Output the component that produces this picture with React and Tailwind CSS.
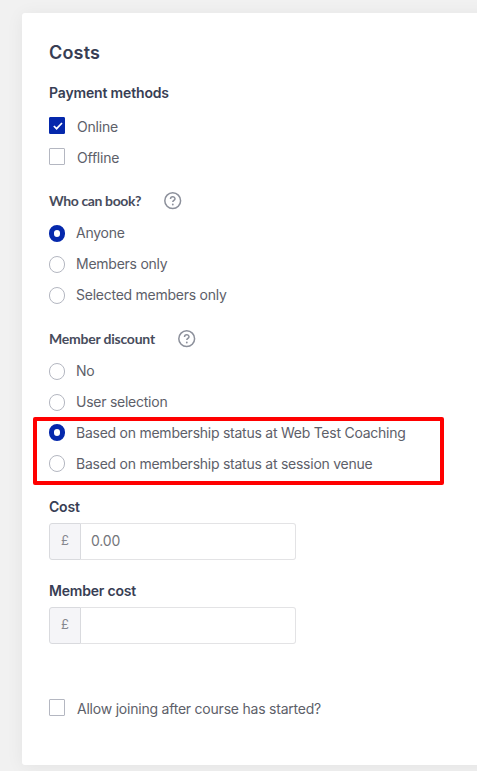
import React, { useState } from "react";
import clsx from "clsx";

const Checkbox = ({ label, checked, onChange }) => (
  <label className="flex items-center h-[31px] cursor-pointer">
    <input
      type="checkbox"
      className="sr-only"
      checked={checked}
      onChange={onChange}
    />
    <span
      className={clsx(
        "flex items-center justify-center shrink-0 w-4 h-[17px] mb-[2px] rounded-[1px] border",
        checked ? "bg-[#0528ac] border-[#0528ac]" : "bg-white border-[#b4b7c1]"
      )}
    >
      {checked && (
        <svg className="w-[10px] h-[8px] ml-[2px]" viewBox="0 0 10 8" fill="none">
          <path d="M0.8 4 L3.6 6.7 L9 1" stroke="#fff" strokeWidth="1.7" />
        </svg>
      )}
    </span>
    <span className="ml-3 text-sm tracking-[-0.22px] whitespace-nowrap">
      {label}
    </span>
  </label>
);

const RadioGroup = ({ name, options, value, onChange }) => (
  <div>
    {options.map((option) => (
      <label
        key={option}
        className="flex items-center h-[30.8px] cursor-pointer"
      >
        <input
          type="radio"
          name={name}
          className="sr-only"
          checked={value === option}
          onChange={() => onChange(option)}
        />
        <span
          className={clsx(
            "shrink-0 w-4 h-[17px] rounded-full bg-white",
            value === option
              ? "border-[5.5px] border-[#0528ac]"
              : "border border-[#b4b7c1]"
          )}
        />
        <span className="ml-[11px] text-sm tracking-[-0.25px] whitespace-nowrap">
          {option}
        </span>
      </label>
    ))}
  </div>
);

const HelpIcon = () => (
  <svg className="w-[18px] h-[18px]" viewBox="0 0 18 18" fill="none">
    <circle cx="8.7" cy="8.7" r="7.9" stroke="#8c909b" strokeWidth="1.5" />
    <path
      d="M6.5 6.9 C6.5 4 11 4.1 11 6.7 C11 8.4 8.8 8.4 8.8 10.1"
      stroke="#8c909b"
      strokeWidth="1.5"
    />
    <circle cx="8.8" cy="12.5" r="0.9" fill="#8c909b" />
  </svg>
);

const PriceInput = ({ value, onChange }) => (
  <div className="flex w-[247px] h-[37px] mt-[6px]">
    <span className="flex items-center justify-center w-8 shrink-0 border border-[#d9dade] rounded-l-[3px] bg-[#f5f5f8] text-[13px] text-[#85878f]">
      £
    </span>
    <input
      className="flex-1 min-w-0 h-[37px] border border-l-0 border-[#e3e3e5] rounded-r-[3px] px-[10px] pb-px text-sm tracking-[-0.2px] text-[#74767b] outline-none"
      value={value}
      onChange={(e) => onChange(e.target.value)}
    />
  </div>
);

const App = () => {
  const [online, setOnline] = useState(true);
  const [offline, setOffline] = useState(false);
  const [booking, setBooking] = useState("Anyone");
  const [discount, setDiscount] = useState(
    "Based on membership status at Web Test Coaching"
  );
  const [cost, setCost] = useState("0.00");
  const [memberCost, setMemberCost] = useState("");
  const [lateJoin, setLateJoin] = useState(false);

  return (
    <div className="h-[771px] overflow-hidden bg-[#f1f1f1] pl-[22px] pt-[13px] font-['Inter',sans-serif] text-[#5d6069]">
      <div className="h-[752px] w-[480px] pl-[27px] pt-[28px] bg-white rounded-[3px] shadow-[0_2px_18px_rgba(0,0,0,0.06)]">
        <h2 className="h-6 leading-6 text-lg font-semibold tracking-[0.2px] text-[#383e54]">
          Costs
        </h2>

        <h3 className="mt-[18px] h-5 leading-5 text-sm font-semibold tracking-[-0.16px] text-[#383e54]">
          Payment methods
        </h3>
        <div className="mt-2">
          <Checkbox
            label="Online"
            checked={online}
            onChange={() => setOnline(!online)}
          />
          <Checkbox
            label="Offline"
            checked={offline}
            onChange={() => setOffline(!offline)}
          />
        </div>

        <div className="flex items-center mt-[18px] mb-[7.1px] h-5">
          <h3 className="w-[115px] text-sm font-bold tracking-[-0.38px] font-['Lato',sans-serif] text-[#474c5c]">
            Who can book?
          </h3>
          <HelpIcon />
        </div>
        <RadioGroup
          name="booking"
          options={["Anyone", "Members only", "Selected members only"]}
          value={booking}
          onChange={setBooking}
        />

        <div className="flex items-center mt-[18.5px] mb-[7px] h-5">
          <h3 className="w-[129px] text-sm font-bold tracking-[-0.22px] font-['Lato',sans-serif] text-[#474c5c]">
            Member discount
          </h3>
          <HelpIcon />
        </div>
        <div className="relative">
          <RadioGroup
            name="discount"
            options={[
              "No",
              "User selection",
              "Based on membership status at Web Test Coaching",
              "Based on membership status at session venue",
            ]}
            value={discount}
            onChange={setDiscount}
          />
          {/* highlight around the membership options */}
          <div className="absolute left-[-16px] top-[61px] w-[411px] h-[68px] border-4 border-[#ff0000] rounded-[2px] pointer-events-none" />
        </div>

        <h3 className="mt-[17.4px] h-5 leading-5 text-sm font-semibold tracking-[-0.2px] text-[#383e54]">
          Cost
        </h3>
        <PriceInput value={cost} onChange={setCost} />

        <h3 className="mt-[21px] h-5 leading-5 text-sm font-semibold tracking-[-0.2px] text-[#383e54]">
          Member cost
        </h3>
        <PriceInput value={memberCost} onChange={setMemberCost} />

        <div className="mt-[49.6px]">
          <Checkbox
            label="Allow joining after course has started?"
            checked={lateJoin}
            onChange={() => setLateJoin(!lateJoin)}
          />
        </div>
      </div>
    </div>
  );
};

export default App;
